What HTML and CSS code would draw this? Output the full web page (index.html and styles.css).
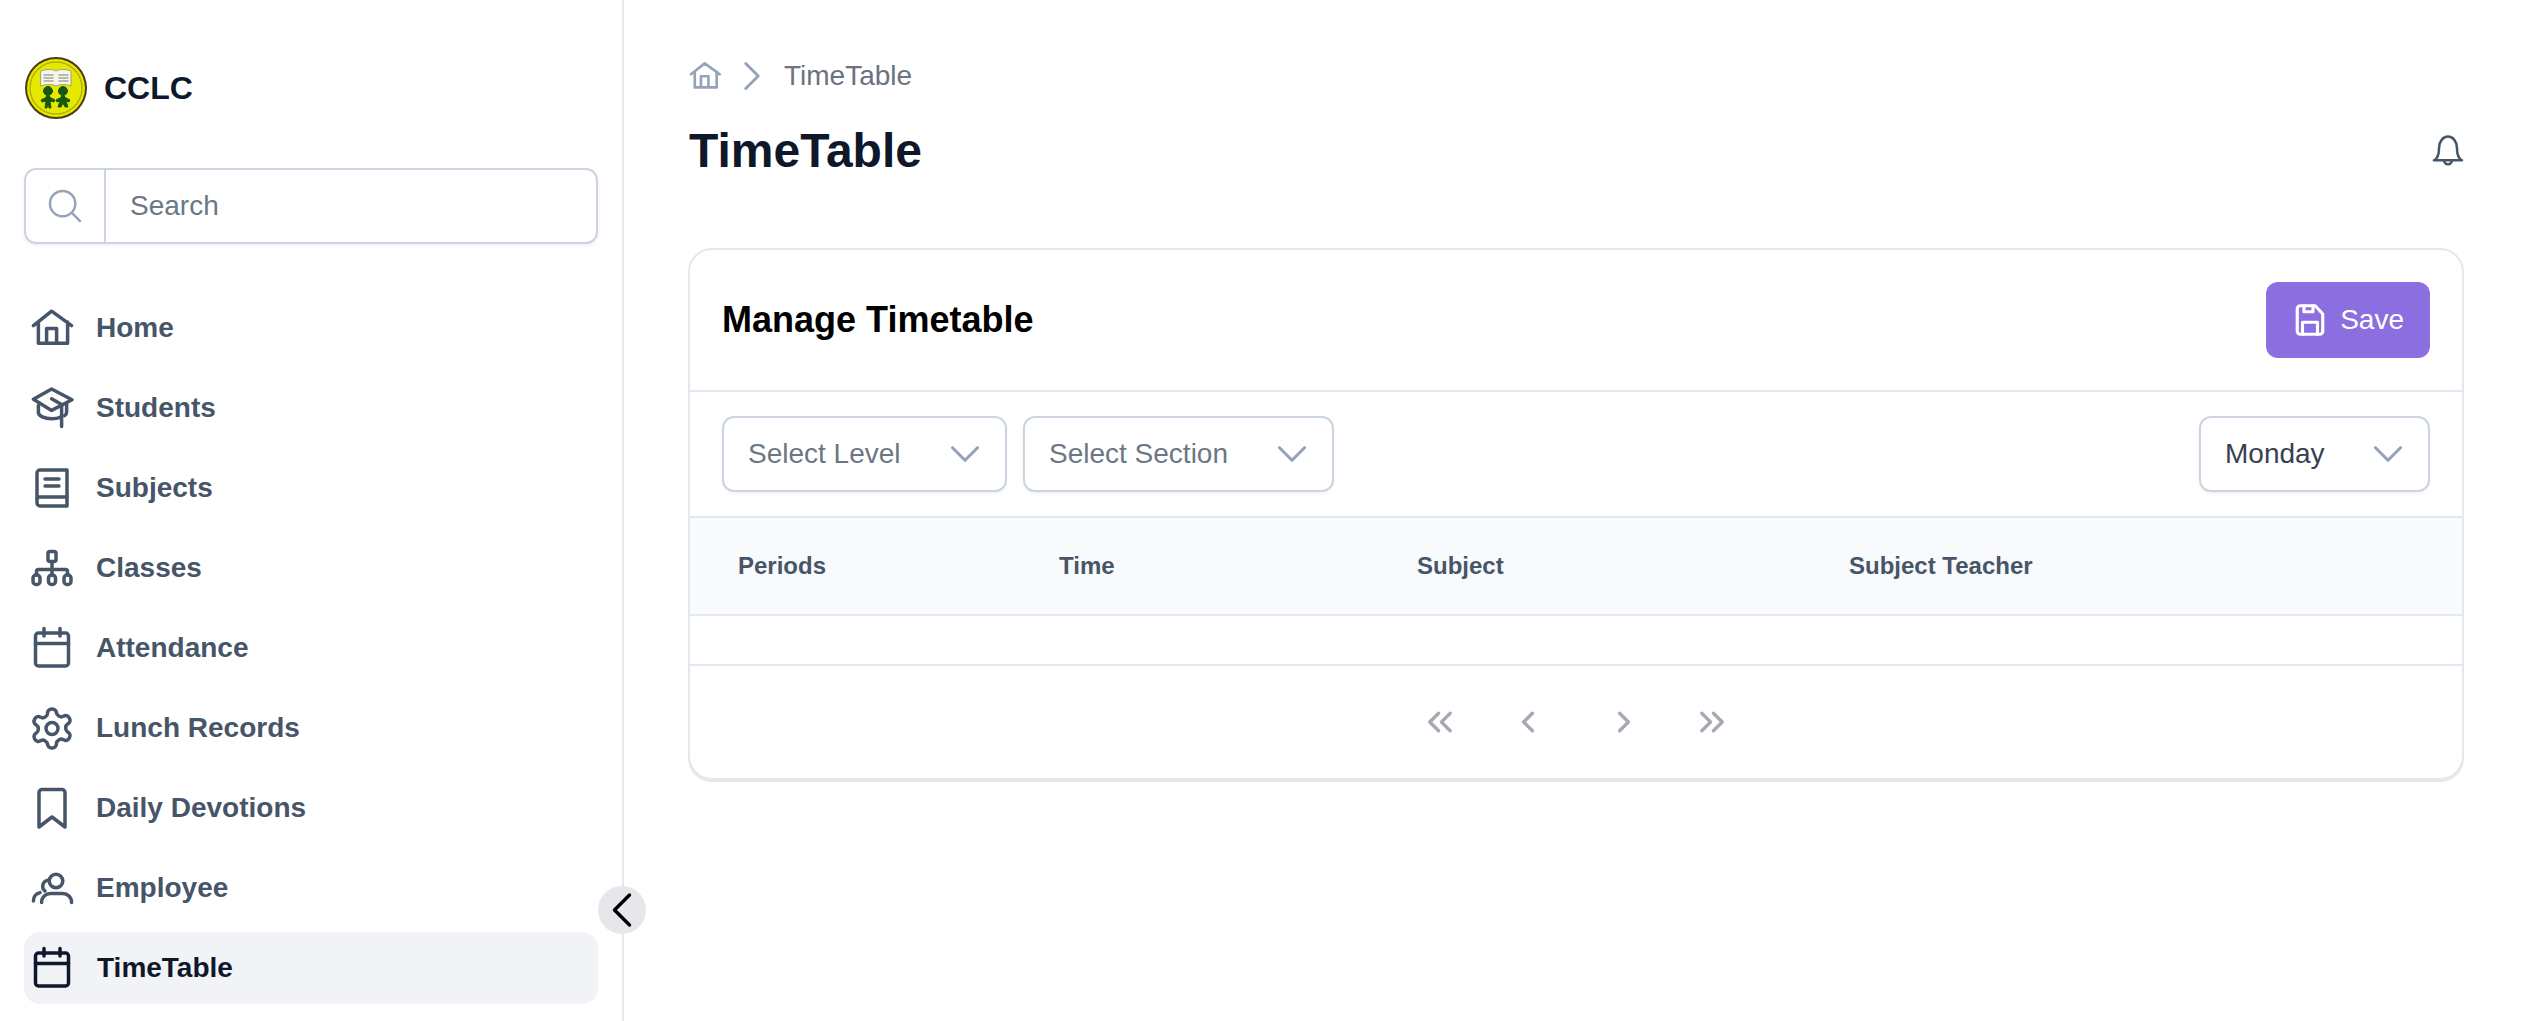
FILE: index.html
```html
<!DOCTYPE html>
<html lang="en">
<head>
    <meta charset="UTF-8">
    <meta name="viewport" content="width=device-width, initial-scale=1.0">
    <title>TimeTable</title>
    <link rel="stylesheet" href="styles.css">
</head>
<body>
    <aside class="sidebar">
        <div class="brand">
            <svg class="brandLogo" viewBox="0 0 64 64">
                <circle cx="32" cy="32" r="31" fill="#4a3c12"/>
                <circle cx="32" cy="32" r="29" fill="#e6e800"/>
                <circle cx="32" cy="32" r="26" fill="none" stroke="#a9ae0a" stroke-width="1.5" stroke-dasharray="2 1.5"/>
                <path d="M17 15c5-2 11-2 15 0c4-2 10-2 15 0v15c-5-2-11-2-15 0c-4-2-10-2-15 0z" fill="#f6f6ea" stroke="#a0a080"/>
                <path d="M20 19h9M20 22h9M20 25h9M35 19h9M35 22h9M35 25h9" stroke="#a5a59a" stroke-width="1.500"/>
                <g class="logoKids">
                    <circle cx="24" cy="35" r="4.500"/>
                    <circle cx="39" cy="35" r="4.500"/>
                    <path d="M24 39l3 3 4 2-1 2-4-1 1 7h-2l-1-5-1 5h-2l1-7-4 1-1-2 4-2z"/>
                    <path d="M39 39l3 3 4 2-1 2-3-1 2 6h-3l-2-4-2 4h-3l2-6-3 1-1-2 4-2z"/>
                </g>
            </svg>
            <span class="brandName">CCLC</span>
        </div>

        <div class="search">
            <div class="searchIcon">
                <svg class="searchGlass" viewBox="0 0 24 24"><circle cx="10.500" cy="10.500" r="8"/><path d="M16.500 16.500l5 5"/></svg>
            </div>
            <input class="searchInput" type="text" placeholder="Search">
        </div>

        <nav class="nav">
            <a class="navItem">
                <svg class="navIcon" viewBox="0 0 24 24"><path d="M2.700 10.800L11.800 3.600l10 7.200M5.200 9v10.600h14.600V9M9.300 19.600V12.200h5v7.400"/></svg>
                Home
            </a>
            <a class="navItem">
                <svg class="navIcon" viewBox="0 0 24 24"><path d="M11.800 2.500L22 7.900l-10.200 5.300L2.700 7.600z"/><path d="M5.200 10.800v3.500c0 1.600 3 3.100 6.600 3.100 1.800 0 3.500-.4 5-1"/><path d="M11.800 7.400l5 2.900v11"/><path d="M19.300 9.800v4.500c0 .6-.4 1.100-1 1.500"/></svg>
                Students
            </a>
            <a class="navItem">
                <svg class="navIcon" viewBox="0 0 24 24"><path d="M19.500 3H6a1.500 1.500 0 0 0-1.500 1.500v15A1.500 1.500 0 0 0 6 21h13.500z"/><path d="M4.500 17.250A1.500 1.500 0 0 1 6 16.500h13.500"/><path d="M8.500 7.500h7M8.500 11h7"/></svg>
                Subjects
            </a>
            <a class="navItem">
                <svg class="navIcon" viewBox="0 0 24 24"><rect x="10" y="3.750" width="4" height="5" rx="1"/><path d="M12 8.750v7"/><path d="M4.250 15.500v-1.750a1 1 0 0 1 1-1h13.500a1 1 0 0 1 1 1v1.750"/><rect x="2.500" y="15.500" width="3.500" height="4.750" rx="1.500"/><rect x="10.250" y="15.500" width="3.500" height="4.750" rx="1.500"/><rect x="18" y="15.500" width="3.500" height="4.750" rx="1.500"/></svg>
                Classes
            </a>
            <a class="navItem">
                <svg class="navIcon" viewBox="0 0 24 24"><rect x="3.750" y="4.500" width="16.500" height="16.500" rx="1.500"/><path d="M3.750 9.750h16.500M8 2.250V6M16 2.250V6"/></svg>
                Attendance
            </a>
            <a class="navItem">
                <svg class="navIcon" viewBox="0 0 24 24"><path d="M12.220 2.500h-.44a2 2 0 0 0-2 2v.18a2 2 0 0 1-1 1.730l-.43.25a2 2 0 0 1-2 0l-.15-.08a2 2 0 0 0-2.730.73l-.22.38a2 2 0 0 0 .73 2.730l.15.1a2 2 0 0 1 1 1.720v.51a2 2 0 0 1-1 1.740l-.15.09a2 2 0 0 0-.73 2.730l.22.38a2 2 0 0 0 2.730.73l.15-.08a2 2 0 0 1 2 0l.43.25a2 2 0 0 1 1 1.730V20a2 2 0 0 0 2 2h.44a2 2 0 0 0 2-2v-.18a2 2 0 0 1 1-1.730l.43-.25a2 2 0 0 1 2 0l.15.08a2 2 0 0 0 2.730-.73l.22-.39a2 2 0 0 0-.73-2.730l-.15-.08a2 2 0 0 1-1-1.740v-.5a2 2 0 0 1 1-1.740l.15-.09a2 2 0 0 0 .73-2.730l-.22-.38a2 2 0 0 0-2.730-.73l-.15.08a2 2 0 0 1-2 0l-.43-.25a2 2 0 0 1-1-1.730V4.500a2 2 0 0 0-2-2z"/><circle cx="12" cy="12.200" r="3"/></svg>
                Lunch Records
            </a>
            <a class="navItem">
                <svg class="navIcon" viewBox="0 0 24 24"><path d="M7 2.750h10a1.500 1.500 0 0 1 1.500 1.500V21.500L12 16.500l-6.500 5V4.250A1.500 1.500 0 0 1 7 2.750z"/></svg>
                Daily Devotions
            </a>
            <a class="navItem">
                <svg class="navIcon" viewBox="0 0 24 24"><circle cx="14" cy="8.500" r="3.400"/><path d="M6.800 19.300c0-2.700 2-4.500 4.500-4.500h6c2.500 0 4.500 1.800 4.500 4.500"/><path d="M9.700 8.200a3 3 0 0 0-1.200 5.300"/><path d="M2.700 18.500c0-2 1.300-3.700 3.300-4.200"/></svg>
                Employee
            </a>
            <a class="navItem active">
                <svg class="navIcon" viewBox="0 0 24 24"><rect x="3.750" y="4.500" width="16.500" height="16.500" rx="1.500"/><path d="M3.750 9.750h16.500M8 2.250V6M16 2.250V6"/></svg>
                <span class="activeLabel">TimeTable</span>
            </a>
        </nav>

        <button class="collapseBtn">
            <svg class="navIcon" viewBox="0 0 24 24"><path d="M15.750 19.500L8.250 12l7.500-7.500"/></svg>
        </button>
    </aside>

    <main class="main">
        <div class="crumbs">
            <svg class="crumbHome" viewBox="0 0 24 24"><path d="M2.700 10.800L11.800 3.600l10 7.200M5.200 9v10.600h14.600V9M9.300 19.600V12.200h5v7.400"/></svg>
            <svg class="crumbArrow" viewBox="0 0 24 24"><path d="M8.250 4.500l7.500 7.500-7.500 7.500"/></svg>
            <span class="crumbText">TimeTable</span>
        </div>

        <div class="pageHead">
            <h1 class="pageTitle">TimeTable</h1>
            <svg class="bell" viewBox="0 0 24 24"><path d="M1.500 19h21c-2-1-3.800-3.500-3.800-9.500a6.700 8.300 0 0 0-13.400 0c0 6-1.800 8.500-3.800 9.500z"/><path d="M9 19a3 3 0 0 0 6 0"/></svg>
        </div>

        <section class="card">
            <div class="cardHead">
                <h2 class="cardTitle">Manage Timetable</h2>
                <button class="saveBtn">
                    <svg class="saveIcon" viewBox="0 0 24 24"><path d="M5.500 2.500h10l5 5.500v11.500a2 2 0 0 1-2 2h-13a2 2 0 0 1-2-2v-15a2 2 0 0 1 2-2z"/><path d="M8 2.500v4h6v-4"/><path d="M7 21.500v-8h10v8"/></svg>
                    Save
                </button>
            </div>

            <div class="filters">
                <div class="filterGroup">
                    <div class="select levelSelect"><span>Select Level</span><svg class="selectArrow" viewBox="0 0 24 24"><path d="M19.500 8.250l-7.500 7.500-7.500-7.500"/></svg></div>
                    <div class="select sectionSelect"><span>Select Section</span><svg class="selectArrow" viewBox="0 0 24 24"><path d="M19.500 8.250l-7.500 7.500-7.500-7.500"/></svg></div>
                </div>
                <div class="select daySelect"><span>Monday</span><svg class="selectArrow" viewBox="0 0 24 24"><path d="M19.500 8.250l-7.500 7.500-7.500-7.500"/></svg></div>
            </div>

            <table class="ttTable">
                <colgroup>
                    <col class="colPeriods">
                    <col class="colTime">
                    <col class="colSubject">
                    <col class="colTeacher">
                    <col>
                </colgroup>
                <thead>
                    <tr>
                        <th>Periods</th>
                        <th>Time</th>
                        <th>Subject</th>
                        <th>Subject Teacher</th>
                        <th></th>
                    </tr>
                </thead>
                <tbody>
                    <tr><td colspan="5"></td></tr>
                </tbody>
            </table>

            <div class="pager">
                <svg class="pageBtn firstBtn" viewBox="0 0 24 24"><path d="M20.750 19.500l-7.500-7.500 7.500-7.500m-10 15L3.250 12l7.500-7.500"/></svg>
                <svg class="pageBtn" viewBox="0 0 24 24"><path d="M15.750 19.500L8.250 12l7.500-7.500"/></svg>
                <svg class="pageBtn" viewBox="0 0 24 24"><path d="M8.250 4.500l7.500 7.500-7.500 7.500"/></svg>
                <svg class="pageBtn lastBtn" viewBox="0 0 24 24"><path d="M3.250 4.500l7.500 7.500-7.500 7.500m10-15l7.500 7.500-7.500 7.500"/></svg>
            </div>
        </section>
    </main>
</body>
</html>
```

FILE: styles.css
```css
*{
    box-sizing: border-box;
}
body{
    margin: 0;
    display: flex;
    height: 100vh;
    overflow: hidden;
    background: #fff;
    font-family: "Liberation Sans", Arial, sans-serif;
    color: #0f172a;
}
svg{
    fill: none;
    stroke-linecap: round;
    stroke-linejoin: round;
}

/* sidebar */
.sidebar{
    position: relative;
    width: 624px;
    flex-shrink: 0;
    padding: 56px 24px 0;
    border-right: 2px solid #e2e8f0;
}
.brand{
    display: flex;
    align-items: center;
    gap: 16px;
    height: 64px;
}
.brandLogo{
    width: 64px;
    height: 64px;
}
.logoKids{
    fill: #14590f;
    stroke: #14590f;
    stroke-width: 1;
}
.brandName{
    font-size: 32px;
    font-weight: 700;
}
.search{
    display: flex;
    width: 574px;
    height: 76px;
    margin-top: 48px;
    border: 2px solid #cbd5e1;
    border-radius: 12px;
    box-shadow: 0 2px 3px rgba(15, 23, 42, .06);
}
.searchIcon{
    display: flex;
    align-items: center;
    justify-content: center;
    width: 80px;
    border-right: 2px solid #cbd5e1;
}
.searchGlass{
    width: 38px;
    height: 38px;
    stroke: #94a3b8;
    stroke-width: 1.5;
}
.searchInput{
    flex: 1;
    min-width: 0;
    padding: 0 24px;
    border: none;
    outline: none;
    background: none;
    font: 28px "Liberation Sans", Arial, sans-serif;
}
.searchInput::placeholder{
    color: #6b7785;
    opacity: 1;
}
.nav{
    display: flex;
    flex-direction: column;
    gap: 8px;
    width: 574px;
    margin-top: 48px;
}
.navItem{
    display: flex;
    align-items: center;
    gap: 20px;
    height: 72px;
    padding-left: 4px;
    border-radius: 16px;
    font-size: 28px;
    font-weight: 700;
    color: #475569;
}
.navIcon{
    width: 48px;
    height: 48px;
    flex-shrink: 0;
    stroke: currentColor;
    stroke-width: 1.75;
}
.navItem.active{
    background: #f1f3f7;
    color: #0f172a;
}
.activeLabel{
    margin-left: 1px;
}
.collapseBtn{
    position: absolute;
    left: 598px;
    top: 886px;
    display: flex;
    align-items: center;
    justify-content: center;
    width: 48px;
    height: 48px;
    padding: 0;
    border: none;
    border-radius: 50%;
    background: #e5e7eb;
    color: #000;
}

/* main */
.main{
    flex: 1;
    min-width: 0;
    padding: 56px 66px 0 64px;
}
.crumbs{
    display: flex;
    align-items: center;
    height: 40px;
}
.crumbHome{
    width: 36px;
    height: 36px;
    margin-left: -1px;
    stroke: #94a3b8;
    stroke-width: 1.75;
}
.crumbArrow{
    width: 40px;
    height: 40px;
    margin-left: 9px;
    stroke: #94a3b8;
    stroke-width: 1.75;
}
.crumbText{
    margin-left: 12px;
    font-size: 28px;
    color: #6b7280;
}
.pageHead{
    display: flex;
    align-items: center;
    justify-content: space-between;
    height: 56px;
    margin-top: 27px;
}
.pageTitle{
    margin: 0 0 0 1px;
    font-size: 48px;
    font-weight: 700;
    line-height: 56px;
}
.bell{
    width: 32px;
    height: 32px;
    stroke: #475569;
    stroke-width: 1.9;
}
.card{
    margin-top: 69px;
    border: 2px solid #e2e8f0;
    border-radius: 24px;
    box-shadow: 0 2px 0 #e2e6e8;
}
.cardHead{
    display: flex;
    align-items: center;
    justify-content: space-between;
    padding: 32px;
    border-bottom: 2px solid #e2e8f0;
}
.cardTitle{
    margin: 0;
    font-size: 36px;
    font-weight: 700;
    color: #000;
}
.saveBtn{
    display: flex;
    align-items: center;
    gap: 12px;
    height: 76px;
    padding: 0 26px;
    border: none;
    border-radius: 12px;
    background: #8b6ee0;
    font: 28px "Liberation Sans", Arial, sans-serif;
    color: #fff;
}
.saveIcon{
    width: 36px;
    height: 36px;
    stroke: #fff;
    stroke-width: 2.1;
}
.filters{
    display: flex;
    align-items: center;
    justify-content: space-between;
    padding: 24px 32px;
    border-bottom: 2px solid #e2e8f0;
}
.filterGroup{
    display: flex;
    gap: 16px;
}
.select{
    display: flex;
    align-items: center;
    justify-content: space-between;
    height: 76px;
    padding: 0 20px 0 24px;
    border: 2px solid #cbd5e1;
    border-radius: 12px;
    box-shadow: 0 2px 3px rgba(15, 23, 42, .05);
    font-size: 28px;
    color: #6b7785;
}
.levelSelect{
    width: 285px;
}
.sectionSelect{
    width: 311px;
}
.daySelect{
    width: 231px;
    color: #374151;
}
.selectArrow{
    width: 40px;
    height: 40px;
    stroke: #94a3b8;
    stroke-width: 1.9;
}
.ttTable{
    width: 100%;
    border-collapse: separate;
    border-spacing: 0;
    table-layout: fixed;
}
.colPeriods{
    width: 321px;
}
.colTime{
    width: 358px;
}
.colSubject{
    width: 432px;
}
.colTeacher{
    width: 500px;
}
.ttTable th{
    height: 98px;
    padding: 0 0 0 48px;
    border-bottom: 2px solid #e2e8f0;
    background: #f8fafc;
    text-align: left;
    font-size: 24px;
    font-weight: 700;
    color: #475569;
}
.ttTable td{
    height: 50px;
    padding: 0;
    border-bottom: 2px solid #e2e8f0;
}
.pager{
    display: flex;
    align-items: center;
    justify-content: center;
    gap: 68px;
    height: 112px;
}
.pageBtn{
    width: 28px;
    height: 28px;
    stroke: #a3aab5;
    stroke-width: 2.9;
}
.firstBtn{
    margin-right: -8px;
}
.lastBtn{
    margin-left: -8px;
}
```
